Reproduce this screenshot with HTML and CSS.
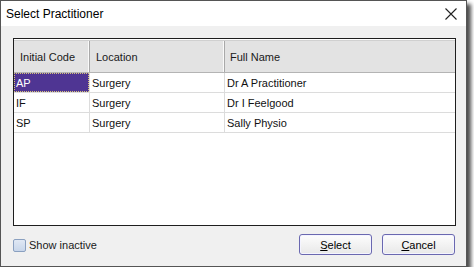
FILE: index.html
```html
<!DOCTYPE html>
<html>
<head>
<meta charset="utf-8">
<link rel="stylesheet" href="styles.css">
</head>
<body>
<div class="window">
  <div class="titlebar">
    <span class="title">Select Practitioner</span>
    <svg class="close" width="12" height="12" viewBox="0 0 12 12"><path d="M0.5 0.5 L11.5 11.5 M11.5 0.5 L0.5 11.5" stroke="#222" stroke-width="1.1" fill="none"/></svg>
  </div>
  <div class="body">
    <div class="grid">
      <div class="row head">
        <div class="cell c1">Initial Code</div>
        <div class="cell c2">Location</div>
        <div class="cell c3">Full Name</div>
      </div>
      <div class="row">
        <div class="cell c1 sel"><span>AP</span></div>
        <div class="cell c2">Surgery</div>
        <div class="cell c3">Dr A Practitioner</div>
      </div>
      <div class="row">
        <div class="cell c1">IF</div>
        <div class="cell c2">Surgery</div>
        <div class="cell c3">Dr I Feelgood</div>
      </div>
      <div class="row">
        <div class="cell c1">SP</div>
        <div class="cell c2">Surgery</div>
        <div class="cell c3">Sally Physio</div>
      </div>
    </div>
    <div class="footer">
      <label class="check"><span class="box"></span>Show inactive</label>
      <div class="buttons">
        <button class="btn"><u>S</u>elect</button>
        <button class="btn"><u>C</u>ancel</button>
      </div>
    </div>
  </div>
</div>
</body>
</html>
```
FILE: styles.css
```css
html, body {
  margin: 0;
  padding: 0;
  background: #ffffff;
}
body {
  font-family: "Liberation Sans", Arial, sans-serif;
  font-size: 11px;
  color: #000;
}
.window {
  width: 467px;
  height: 267px;
  box-sizing: border-box;
  border: 1px solid #555;
  display: flex;
  flex-direction: column;
  box-shadow: 4px 4px 4px rgba(0,0,0,0.7);
  background: #f0f0f0;
}
.titlebar {
  height: 25px;
  background: #fff;
  display: flex;
  align-items: center;
  justify-content: space-between;
  padding: 0 9px 0 5px;
}
.title {
  font-size: 12px;
  color: #000;
}
.close {
  display: block;
  margin-top: 1px;
}
.body {
  flex: 1;
  padding: 12px 10px 0 12px;
  display: flex;
  flex-direction: column;
}
.grid {
  height: 188px;
  box-sizing: border-box;
  border: 1px solid #1e1e1e;
  background: #fff;
  padding-top: 1px;
}
.row {
  display: flex;
  height: 20px;
  box-sizing: border-box;
  border-bottom: 1px solid #dcdcdc;
}
.row.head {
  height: 33px;
  background: #e3e3e3;
  border-top: 1px solid #d0d0d0;
  border-bottom: 1px solid #b4b4b4;
}
.cell {
  box-sizing: border-box;
  display: flex;
  align-items: center;
  white-space: nowrap;
  border-right: 1px solid #dcdcdc;
  padding-left: 2px;
  color: #111;
}
.head .cell {
  border-right: 1px solid #a9a9a9;
  box-shadow: inset -1px 0 0 #fafafa;
  padding-left: 6px;
  color: #1a1a1a;
}
.c1 { width: 76px; }
.c2 { width: 135px; }
.c3 { flex: 1; border-right: none; }
.head .c3 { border-right: none; box-shadow: none; padding-left: 5px; }
.sel {
  background: #4f3593;
  color: #fff;
  padding: 0;
  border-right: 1px solid #dcdcdc;
}
.sel span {
  flex: 1;
  align-self: stretch;
  display: flex;
  align-items: center;
  padding-left: 1px;
  border: 1px dotted #d8c47a;
}
.footer {
  margin-top: 8px;
  height: 21px;
  display: flex;
  align-items: center;
  justify-content: space-between;
  padding-right: 1px;
}
.check {
  display: flex;
  align-items: center;
  gap: 3px;
  color: #1a1a1a;
  margin-top: 1px;
}
.box {
  width: 11px;
  height: 11px;
  border: 1px solid #8aa0c0;
  border-radius: 2px;
  background: linear-gradient(#e0e8f4, #c8d6ea);
}
.buttons {
  display: flex;
  gap: 10px;
}
.btn {
  width: 73px;
  height: 21px;
  box-sizing: border-box;
  border: 1px solid #6a68b0;
  border-radius: 3px;
  background: linear-gradient(#fdfdfd, #e8e8e8);
  font-family: "Liberation Sans", Arial, sans-serif;
  font-size: 11px;
  color: #000;
  padding: 0;
  box-shadow: inset 0 0 0 1px #f4f4ff;
}
```
